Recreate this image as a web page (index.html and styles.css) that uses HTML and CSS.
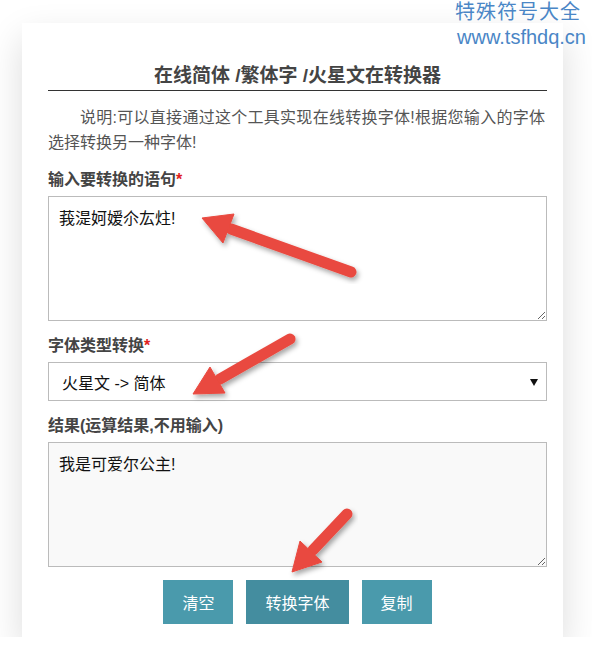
FILE: index.html
```html
<!DOCTYPE html>
<html lang="zh-CN">
<head>
        <meta charset="UTF-8" />
        <meta name="viewport" content="width=device-width, initial-scale=1" />
        <title>在线简体/繁体字/火星文在转换器</title>
        <link rel="stylesheet" href="styles.css">
</head>
<body>

<div class="page">
        <main class="card">
                <h2 class="title">在线简体 /繁体字 /火星文在转换器</h2>
                <p class="desc"><span class="desc-first">说明:可以直接通过这个工具实现在线转换字体!根据您输入的字体</span>选择转换另一种字体!</p>

                <label class="label" for="src">输入要转换的语句<span class="req">*</span></label>
                <textarea id="src" class="box">莪湜妸嫒尒厷炷!</textarea>

                <label class="label" for="mode">字体类型转换<span class="req">*</span></label>
                <div class="select-wrap">
                        <select id="mode" class="select">
                                <option>火星文 -&gt; 简体</option>
                                <option>简体 -&gt; 繁体</option>
                                <option>繁体 -&gt; 简体</option>
                                <option>简体 -&gt; 火星文</option>
                        </select>
                </div>

                <label class="label" for="out">结果(运算结果,不用输入)</label>
                <textarea id="out" class="box result" readonly>我是可爱尔公主!</textarea>

                <div class="buttons">
                        <button class="btn">清空</button>
                        <button class="btn btn-main">转换字体</button>
                        <button class="btn">复制</button>
                </div>
        </main>
</div>

<div class="mark">
        <div class="mark-cn">特殊符号大全</div>
        <div class="mark-url">www.tsfhdq.cn</div>
</div>

<svg class="arrows" width="592" height="666" viewBox="0 0 592 666">
        <defs>
                <filter id="shadow" x="-20%" y="-20%" width="140%" height="140%">
                        <feDropShadow dx="2" dy="3" stdDeviation="2.5" flood-color="#000" flood-opacity="0.35" />
                </filter>
        </defs>
        <g fill="#e9493f" stroke="#e9493f" filter="url(#shadow)">
                <line x1="351" y1="272" x2="231" y2="229" stroke-width="11" stroke-linecap="round" />
                <polygon points="202,218 234,214 223,243" stroke-width="1" stroke-linejoin="round" />
        </g>
        <g fill="#e9493f" stroke="#e9493f" filter="url(#shadow)">
                <line x1="290" y1="339" x2="220" y2="379" stroke-width="11" stroke-linecap="round" />
                <polygon points="193,394 210,367 225,393" stroke-width="1" stroke-linejoin="round" />
        </g>
        <g fill="#e9493f" stroke="#e9493f" filter="url(#shadow)">
                <line x1="347" y1="514" x2="313" y2="550" stroke-width="11" stroke-linecap="round" />
                <polygon points="292,572 300,541 322,562" stroke-width="1" stroke-linejoin="round" />
        </g>
</svg>

</body>
</html>
```

FILE: styles.css
```css
body {
        margin: 0;
        background: #fff;
        font-family: 'Liberation Sans', 'Noto Sans CJK SC', sans-serif;
        color: #444;
        overflow: hidden;
}

.page {
        padding: 23px 0 0 22px;
}

.card {
        width: 541px;
        box-sizing: border-box;
        background: #fff;
        padding: 39px 16px 13px 26px;
        box-shadow: 0 15px 35px rgba(0, 0, 0, 0.14);
}

.title {
        margin: 0;
        font-size: 19px;
        line-height: 28px;
        font-weight: bold;
        text-align: center;
        color: #444;
        border-bottom: 1px solid #333;
}

.desc {
        margin: 14px 0 0;
        font-size: 16px;
        line-height: 25px;
        text-indent: 2em;
        color: #555;
}

.desc-first {
        display: block;
        margin-right: 2px;
        white-space: nowrap;
        text-align: justify;
        text-align-last: justify;
}

.label {
        display: block;
        margin: 13px 0 4px;
        font-size: 16px;
        line-height: 24px;
        font-weight: bold;
        color: #444;
}

.req {
        color: #e02020;
}

.box {
        display: block;
        width: 100%;
        height: 125px;
        box-sizing: border-box;
        margin: 0;
        padding: 12px 10px;
        border: 1px solid #bbb;
        font-family: 'Liberation Sans', 'Noto Sans CJK SC', sans-serif;
        font-size: 16px;
        line-height: 20px;
        color: #111;
        background: #fff;
        outline: none;
}

.result {
        background: #f9f9f9;
}

.select-wrap {
        position: relative;
}

.select-wrap::after {
        content: "";
        position: absolute;
        right: 9px;
        top: 17px;
        border-left: 4px solid transparent;
        border-right: 4px solid transparent;
        border-top: 7px solid #111;
}

.select {
        display: block;
        width: 100%;
        height: 39px;
        box-sizing: border-box;
        margin: 0;
        padding: 4px 13px 0;
        border: 1px solid #bbb;
        border-radius: 0;
        background: #fff;
        appearance: none;
        -webkit-appearance: none;
        font-family: 'Liberation Sans', 'Noto Sans CJK SC', sans-serif;
        font-size: 16px;
        color: #111;
        outline: none;
}

.buttons {
        display: flex;
        justify-content: center;
        gap: 13px;
        margin-top: 13px;
}

.btn {
        height: 44px;
        padding: 0 19px;
        border: none;
        background: #4a9aac;
        color: #fff;
        font-family: 'Liberation Sans', 'Noto Sans CJK SC', sans-serif;
        font-size: 16px;
        cursor: pointer;
}

.btn-main {
        background: #448d9f;
}

.mark {
        position: absolute;
        top: 0;
        right: 6px;
        text-align: right;
        color: #4a86c6;
        font-size: 20px;
        line-height: 25px;
}

.mark-cn {
        letter-spacing: 1px;
        margin-right: 5px;
}

.arrows {
        position: absolute;
        top: 0;
        left: 0;
        pointer-events: none;
}
```
